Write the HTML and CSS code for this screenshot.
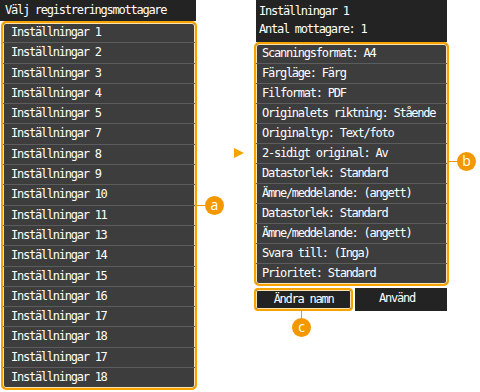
FILE: index.html
```html
<!DOCTYPE html>
<html lang="sv">
<head>
    <meta charset="UTF-8">
    <title>Välj registreringsmottagare</title>
    <link rel="stylesheet" href="styles.css">
</head>
<body>
    <div class="screen">
        <div class="panel left-panel">
            <div class="title-bar">Välj registreringsmottagare</div>
            <ul class="list framed">
                <li>Inställningar 1</li>
                <li>Inställningar 2</li>
                <li>Inställningar 3</li>
                <li>Inställningar 4</li>
                <li>Inställningar 5</li>
                <li>Inställningar 7</li>
                <li>Inställningar 8</li>
                <li>Inställningar 9</li>
                <li>Inställningar 10</li>
                <li>Inställningar 11</li>
                <li>Inställningar 13</li>
                <li>Inställningar 14</li>
                <li>Inställningar 15</li>
                <li>Inställningar 16</li>
                <li>Inställningar 17</li>
                <li>Inställningar 18</li>
                <li>Inställningar 17</li>
                <li>Inställningar 18</li>
            </ul>
        </div>

        <div class="middle">
            <span class="arrow"></span>
        </div>

        <div class="panel right-panel">
            <div class="head">
                <div>Inställningar 1</div>
                <div>Antal mottagare: 1</div>
            </div>
            <ul class="list framed">
                <li>Scanningsformat: A4</li>
                <li>Färgläge: Färg</li>
                <li>Filformat: PDF</li>
                <li>Originalets riktning: Stående</li>
                <li>Originaltyp: Text/foto</li>
                <li>2-sidigt original: Av</li>
                <li>Datastorlek: Standard</li>
                <li>Ämne/meddelande: (angett)</li>
                <li>Datastorlek: Standard</li>
                <li>Ämne/meddelande: (angett)</li>
                <li>Svara till: (Inga)</li>
                <li>Prioritet: Standard</li>
            </ul>
            <div class="buttons">
                <div class="btn btn-active">Ändra namn</div>
                <div class="btn">Använd</div>
            </div>
        </div>

        <!-- callouts -->
        <div class="callout callout-a"><span class="leader"></span><span class="badge">a</span></div>
        <div class="callout callout-b"><span class="leader"></span><span class="badge">b</span></div>
        <div class="callout callout-c"><span class="leader"></span><span class="badge">c</span></div>
    </div>
</body>
</html>
```

FILE: styles.css
```css
body {
    margin: 0;
    background-color: #fff;
    font-family: "DejaVu Sans Mono", "Liberation Mono", monospace;
}

.screen {
    position: relative;
    width: 480px;
    height: 392px;
    display: flex;
    align-items: flex-start;
}

.panel {
    display: flex;
    flex-direction: column;
    color: #fff;
    font-size: 12px;
    letter-spacing: -1.25px;
}

.left-panel {
    width: 197px;
}

.title-bar {
    width: 196px;
    height: 21px;
    box-sizing: border-box;
    background-color: #232323;
    padding: 3px 0 0 5px;
    line-height: 15px;
}

.list {
    list-style: none;
    margin: 0;
    padding: 0;
}

.framed {
    border: 2px solid #f5a300;
    border-radius: 5px;
    background-color: #3d3d3d;
    box-shadow: inset 0 0 0 1px #fbe2b0;
    overflow: hidden;
}

.left-panel .framed {
    margin-left: 1px;
    width: 196px;
    box-sizing: border-box;
}

.list li {
    height: 20.3px;
    box-sizing: border-box;
    line-height: 19px;
    padding-left: 8px;
    border-bottom: 1px solid #5d5d5d;
    white-space: nowrap;
}

.list li:last-child {
    border-bottom: none;
}

.middle {
    width: 57px;
    height: 392px;
    position: relative;
}

.arrow {
    position: absolute;
    left: 37px;
    top: 148px;
    width: 0;
    height: 0;
    border-top: 5px solid transparent;
    border-bottom: 5px solid transparent;
    border-left: 10px solid #f5a300;
}

.right-panel {
    width: 195px;
}

.head {
    margin: 0 2px;
    height: 42px;
    box-sizing: border-box;
    background-color: #232323;
    padding: 2px 0 0 3px;
    line-height: 18px;
}

.right-panel .framed {
    box-sizing: border-box;
    width: 195px;
}

.right-panel .list li {
    height: 20px;
    padding-left: 6px;
}

.buttons {
    margin: 2px 2px 0 0;
    display: flex;
    gap: 2px;
    height: 23px;
}

.btn {
    flex: 1;
    background-color: #232323;
    text-align: center;
    line-height: 21px;
    padding-right: 8px;
}

.btn-active {
    flex: 0 0 99px;
    box-sizing: border-box;
    border: 2px solid #f5a300;
    border-radius: 4px;
    box-shadow: inset 0 0 0 1px #fbe2b0;
    line-height: 18px;
    padding-right: 0;
}

.callout {
    position: absolute;
    display: flex;
    align-items: center;
}

.badge {
    width: 19px;
    height: 19px;
    border-radius: 50%;
    background-color: #f39800;
    color: #fff;
    font-family: "Open Sans", "DejaVu Sans", sans-serif;
    font-size: 14px;
    line-height: 18px;
    text-align: center;
}

.leader {
    display: block;
    background-color: #f39800;
}

.callout-a {
    left: 197px;
    top: 196px;
}

.callout-a .leader,
.callout-b .leader {
    width: 8px;
    height: 1px;
}

.callout-b {
    left: 449px;
    top: 152px;
}

.callout-c {
    left: 292px;
    top: 309px;
    flex-direction: column;
}

.callout-c .leader {
    width: 1px;
    height: 9px;
}
```
